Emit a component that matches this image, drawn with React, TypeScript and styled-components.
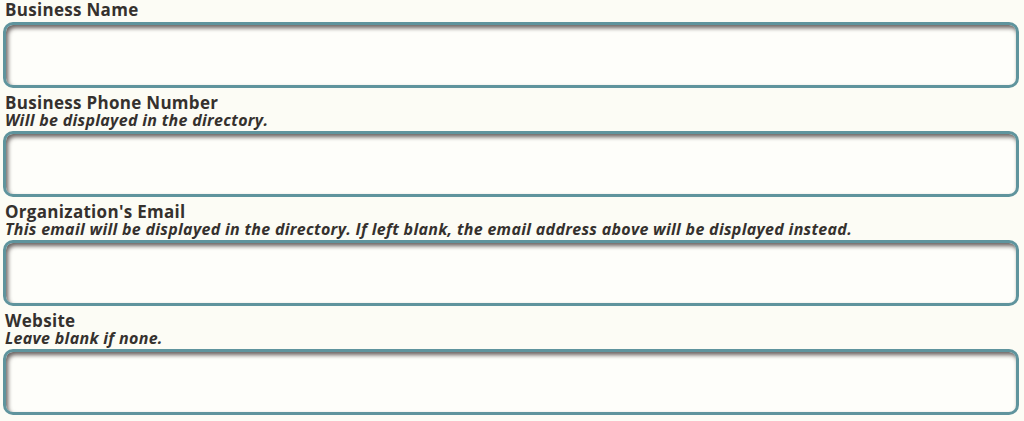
import { createGlobalStyle, styled } from "styled-components";

const GlobalStyle = createGlobalStyle`
  html, body {
    margin: 0;
    padding: 0;
    background: #fcfcf5;
  }
  * {
    box-sizing: border-box;
  }
`;

const fields = [
  { label: "Business Name" },
  { label: "Business Phone Number", hint: "Will be displayed in the directory." },
  {
    label: "Organization's Email",
    hint: "This email will be displayed in the directory. If left blank, the email address above will be displayed instead.",
  },
  { label: "Website", hint: "Leave blank if none." },
];

const App = () => {
  return (
    <>
      <GlobalStyle />
      <Form>
        {fields.map((f) => (
          <Field key={f.label}>
            <Heading>
              <Label>{f.label}</Label>
              {f.hint && <Hint>{f.hint}</Hint>}
            </Heading>
            <Input type="text" />
          </Field>
        ))}
      </Form>
    </>
  );
};

export default App;

const Form = styled.form`
  display: flex;
  flex-direction: column;
  gap: 6px;
  padding: 1px 5px 0 3px;
  font-family: "Open Sans", sans-serif;
`;

const Field = styled.div`
  display: flex;
  flex-direction: column;
  gap: 3px;
`;

const Heading = styled.div`
  display: flex;
  flex-direction: column;
  padding-left: 2px;
  color: #35312e;
`;

const Label = styled.label`
  font-size: 17px;
  font-weight: 700;
  line-height: 18px;
  letter-spacing: 0.3px;
`;

const Hint = styled.span`
  font-size: 16px;
  font-weight: 700;
  font-style: italic;
  line-height: 16px;
  letter-spacing: 0.3px;
`;

const Input = styled.input`
  display: block;
  width: 100%;
  height: 66px;
  border: 3px solid #5f949d;
  border-radius: 10px;
  background: #fefefa;
  box-shadow: inset 2px 3px 4px rgba(40, 30, 30, 0.7);
  outline: none;
  padding: 0 10px;
  font-family: "Open Sans", sans-serif;
  font-size: 16px;
`;
